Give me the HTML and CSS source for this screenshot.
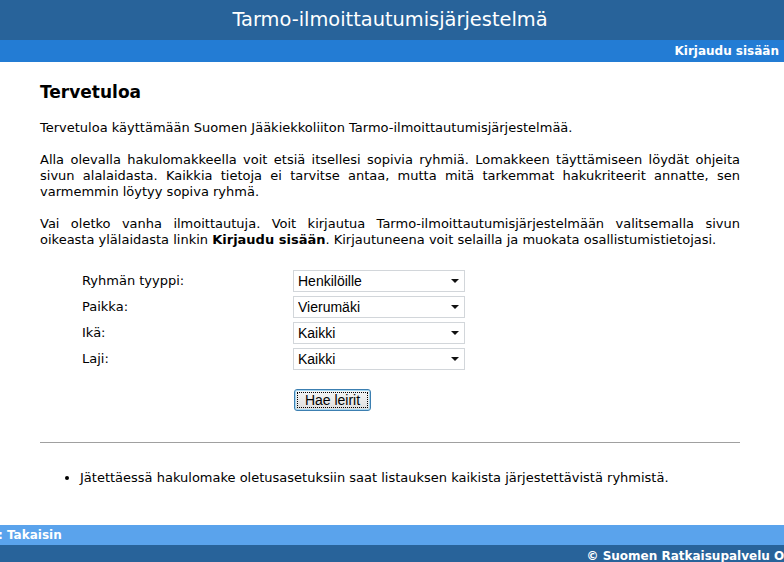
FILE: index.html
```html
<!DOCTYPE html>
<html lang="fi">
<head>
<meta charset="utf-8">
<title>Tarmo-ilmoittautumisjärjestelmä</title>
<link rel="stylesheet" href="styles.css">
</head>
<body>
<div class="page">
  <header class="top">
    <h1 class="title">Tarmo-ilmoittautumisjärjestelmä</h1>
  </header>
  <nav class="nav"><a class="nav-link" href="#">Kirjaudu sisään</a></nav>
  <main class="content">
    <h2 class="heading">Tervetuloa</h2>
    <p class="para">Tervetuloa käyttämään Suomen Jääkiekkoliiton Tarmo-ilmoittautumisjärjestelmää.</p>
    <p class="para">Alla olevalla hakulomakkeella voit etsiä itsellesi sopivia ryhmiä. Lomakkeen täyttämiseen löydät ohjeita sivun alalaidasta. Kaikkia tietoja ei tarvitse antaa, mutta mitä tarkemmat hakukriteerit annatte, sen varmemmin löytyy sopiva ryhmä.</p>
    <p class="para">Vai oletko vanha ilmoittautuja. Voit kirjautua Tarmo-ilmoittautumisjärjestelmään valitsemalla sivun oikeasta ylälaidasta linkin <b>Kirjaudu sisään</b>. Kirjautuneena voit selailla ja muokata osallistumistietojasi.</p>
    <form class="search">
      <label class="lbl">Ryhmän tyyppi:</label>
      <div class="sel"><select class="select"><option>Henkilöille</option></select></div>
      <label class="lbl">Paikka:</label>
      <div class="sel"><select class="select"><option>Vierumäki</option></select></div>
      <label class="lbl">Ikä:</label>
      <div class="sel"><select class="select"><option>Kaikki</option></select></div>
      <label class="lbl">Laji:</label>
      <div class="sel"><select class="select"><option>Kaikki</option></select></div>
      <div class="btn-cell"><button type="button" class="btn"><span class="btn-inner">Hae leirit</span></button></div>
    </form>
    <hr class="rule">
    <ul class="notes">
      <li>Jätettäessä hakulomake oletusasetuksiin saat listauksen kaikista järjestettävistä ryhmistä.</li>
    </ul>
  </main>
  <div class="back"><a class="back-link" href="#">: Takaisin</a></div>
  <footer class="foot"><span class="copy">© Suomen Ratkaisupalvelu Oy</span></footer>
</div>
</body>
</html>
```
FILE: styles.css
```css
html, body {
  margin: 0;
  padding: 0;
  background: #ffffff;
  overflow: hidden;
}
.page {
  width: 784px;
  font-family: "DejaVu Sans", Verdana, sans-serif;
  font-size: 13px;
  color: #000;
}
.top {
  background: #28639a;
  height: 40px;
  display: flex;
  align-items: center;
  justify-content: center;
}
.title {
  margin: 0;
  font-family: "DejaVu Sans", sans-serif;
  font-weight: normal;
  font-size: 19.4px;
  color: #ffffff;
  position: relative;
  top: -1px;
  left: -2px;
}
.nav {
  background: #237cd4;
  height: 22px;
  display: flex;
  align-items: center;
  justify-content: flex-end;
  padding-right: 5px;
}
.nav-link, .back-link {
  font-family: "DejaVu Sans", sans-serif;
  font-weight: bold;
  font-size: 12px;
  color: #ffffff;
  text-decoration: none;
}
.content {
  padding: 0 44px 0 40px;
  height: 463px;
}
.heading {
  margin: 0;
  padding-top: 20px;
  font-size: 17px;
  font-weight: bold;
  line-height: 20px;
}
.para {
  margin: 16px 0 0;
  line-height: 16px;
  text-align: justify;
}
.heading + .para {
  margin-top: 18px;
}
.search {
  margin: 22px 0 0 42px;
  display: grid;
  grid-template-columns: 211px 172px;
  row-gap: 4px;
  align-items: center;
}
.lbl {
  line-height: 22px;
}
.sel {
  position: relative;
  height: 22px;
}
.sel::after {
  content: "";
  position: absolute;
  right: 6px;
  top: 9px;
  border-left: 4px solid transparent;
  border-right: 4px solid transparent;
  border-top: 4px solid #111;
  pointer-events: none;
}
.select {
  appearance: none;
  -webkit-appearance: none;
  width: 172px;
  height: 22px;
  margin: 0;
  padding: 0 0 0 4px;
  border: 1px solid #d2d6da;
  border-radius: 0;
  background: #fff;
  font-family: "Liberation Sans", Arial, sans-serif;
  font-size: 14px;
  color: #000;
}
.btn-cell {
  grid-column: 2;
  padding-top: 15px;
}
.btn {
  width: 77px;
  height: 22px;
  padding: 2px;
  margin: 0 0 0 1px;
  border: 1px solid #3c7fb1;
  border-radius: 3px;
  background: linear-gradient(#f6f6f6, #dedede);
  font-family: "Liberation Sans", Arial, sans-serif;
  font-size: 14px;
  color: #000;
  box-shadow: inset 0 0 0 1px #a7d8f3;
}
.btn-inner {
  display: block;
  height: 100%;
  border: 1px dotted #000;
  line-height: 14px;
  box-sizing: border-box;
}
.rule {
  margin: 31px 0 0;
  border: 0;
  border-top: 1px solid #a0a0a0;
  height: 0;
}
.notes {
  margin: 27px 0 0;
  padding-left: 40px;
  line-height: 16px;
}
.back {
  background: #5aa3ec;
  height: 20px;
  display: flex;
  align-items: center;
}
.back-link {
  margin-left: -2px;
}
.foot {
  background: #28639a;
  height: 20px;
  display: flex;
  justify-content: flex-end;
  align-items: center;
  overflow: hidden;
}
.copy {
  font-family: "DejaVu Sans", sans-serif;
  font-weight: bold;
  font-size: 12px;
  color: #fff;
  white-space: nowrap;
  margin-right: -8px;
  position: relative;
  top: 1px;
}
```
